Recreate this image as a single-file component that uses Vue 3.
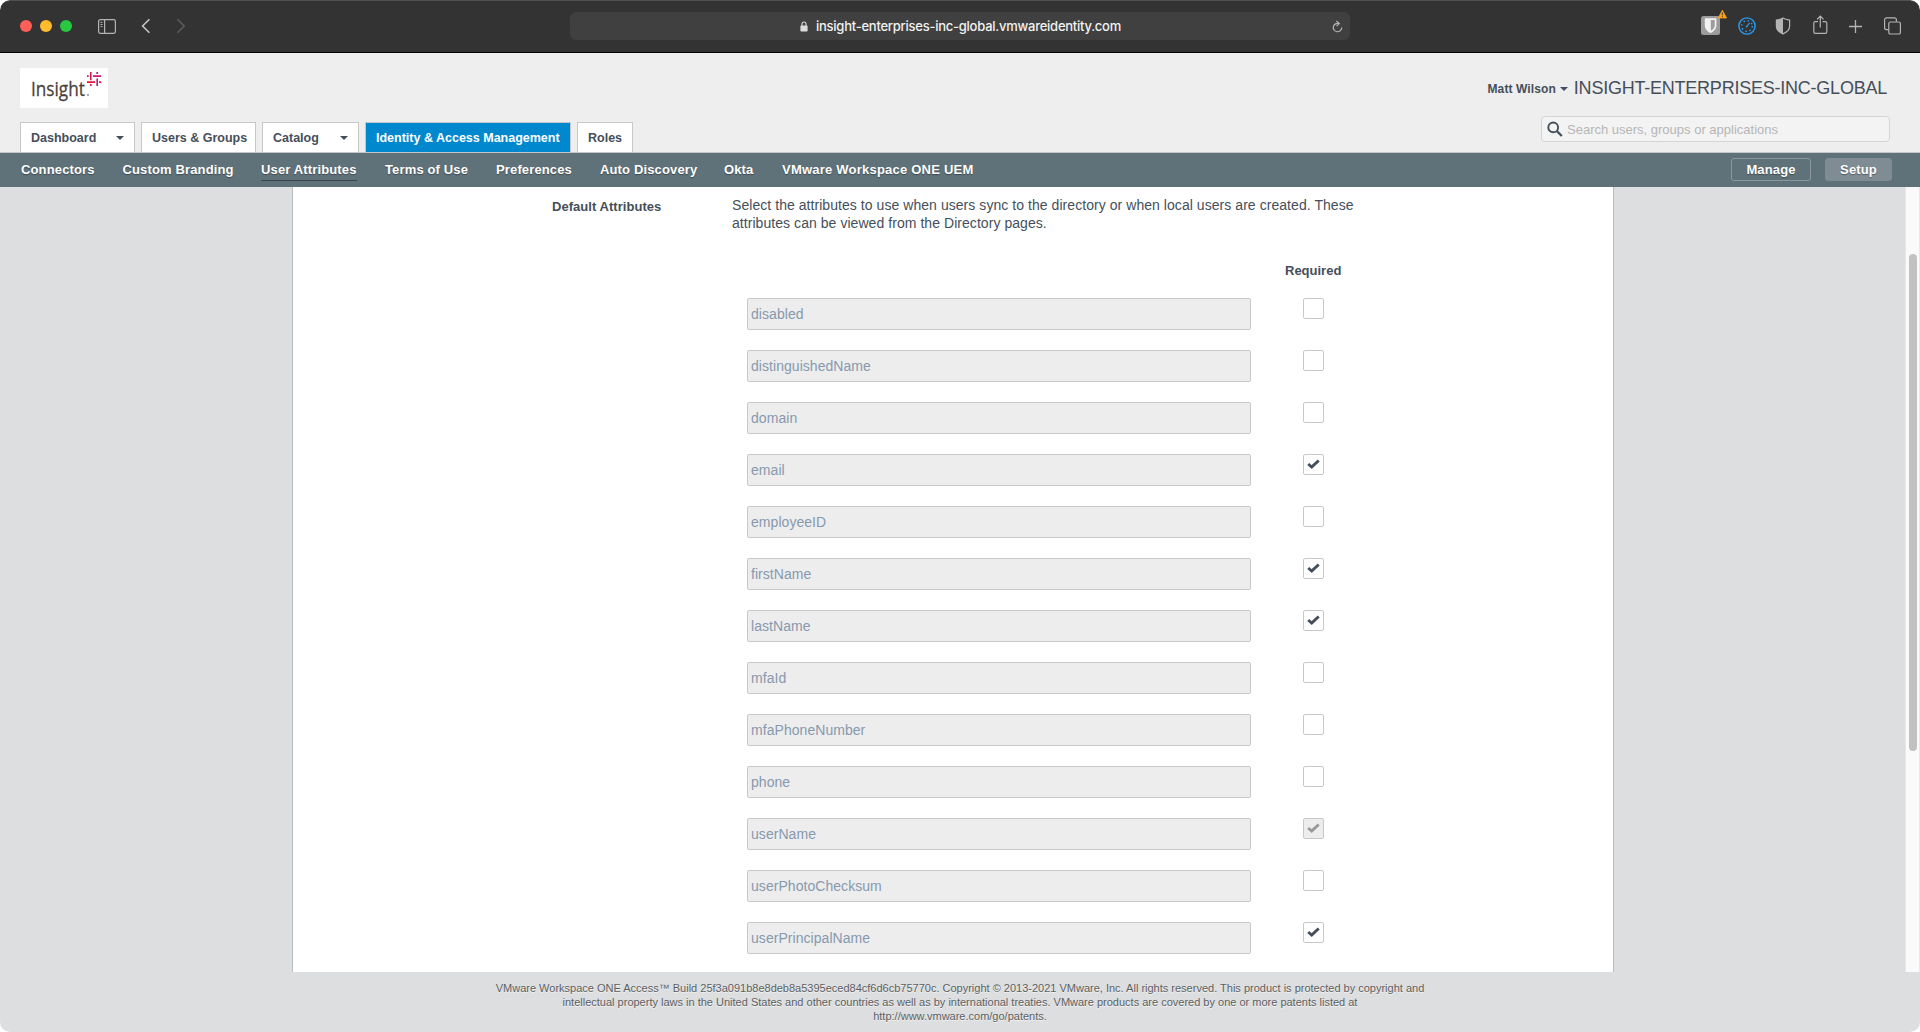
<script setup>
const tabs = [
  { label: 'Dashboard', w: 115, caret: true },
  { label: 'Users & Groups', w: 115 },
  { label: 'Catalog', w: 97, caret: true },
  { label: 'Identity & Access Management', w: 206, active: true },
  { label: 'Roles', w: 56 },
]
const links = [
  { label: 'Connectors', w: 73.5 },
  { label: 'Custom Branding', w: 110.5 },
  { label: 'User Attributes', w: 96, active: true },
  { label: 'Terms of Use', w: 83 },
  { label: 'Preferences', w: 76 },
  { label: 'Auto Discovery', w: 96 },
  { label: 'Okta', w: 30 },
  { label: 'VMware Workspace ONE UEM', w: 192 },
]
const attributes = [
  { name: 'disabled' },
  { name: 'distinguishedName' },
  { name: 'domain' },
  { name: 'email', required: true },
  { name: 'employeeID' },
  { name: 'firstName', required: true },
  { name: 'lastName', required: true },
  { name: 'mfaId' },
  { name: 'mfaPhoneNumber' },
  { name: 'phone' },
  { name: 'userName', required: true, locked: true },
  { name: 'userPhotoChecksum' },
  { name: 'userPrincipalName', required: true },
]
</script>

<template>
  <div class="window">
    <header class="chrome">
      <div class="left">
        <i class="dot red"></i><i class="dot yellow"></i><i class="dot green"></i>
        <svg class="side" width="18" height="15" viewBox="0 0 18 15" fill="none" stroke="#b4b4b4" stroke-width="1.2"><rect x=".6" y=".6" width="16.8" height="13.8" rx="1.8" /><path d="M6.6 1v13" /><path d="M2.500 3.400h2M2.500 5.500h2M2.500 7.600h2" stroke-width="1" /></svg>
        <svg class="back" width="10" height="16" viewBox="0 0 10 16" fill="none" stroke="#c4c4c4" stroke-width="1.6"><path d="M8.400 1.300 1.600 8l6.800 6.700" /></svg>
        <svg class="fwd" width="10" height="16" viewBox="0 0 10 16" fill="none" stroke="#5c5c5c" stroke-width="1.6"><path d="m1.400 1.300 6.800 6.700-6.800 6.700" /></svg>
      </div>
      <div class="address">
        <svg class="lock" width="8" height="11" viewBox="0 0 8 11"><rect x=".4" y="4.600" width="7.200" height="5.900" rx="1" fill="#dcdcdc" /><path d="M2 5V3a2 2 0 0 1 4 0v2" fill="none" stroke="#dcdcdc" stroke-width="1.100" /></svg>
        <span class="t url">insight-enterprises-inc-global.vmwareidentity.com</span>
        <svg class="reload" width="11" height="13" viewBox="0 0 11 13" fill="none" stroke="#b5b5b5" stroke-width="1.200"><path d="M6.900 3.600A4.200 4.200 0 1 0 9.700 7.500M4.400 1l2.900 2.600-2.800 2.500" /></svg>
      </div>
      <div class="tools">
        <svg width="28" height="28" viewBox="0 0 28 28"><rect x="1" y="7" width="19" height="19" rx="2.500" fill="#9c9c9c" /><path d="M4.800 9.200h11.600v7.200c0 3.700-2.800 6-5.800 7.600-3-1.600-5.800-3.900-5.800-7.600z" fill="#f2f2f2" /><path d="M10.800 11h3.900v5.400c0 2.500-1.600 4-3.900 5.400z" fill="#9c9c9c" /><path d="M22.400 1.300 26.600 9H18.200z" fill="#ffa21a" stroke="#ffa21a" stroke-width=".8" stroke-linejoin="round" /><path d="M22.400 3.400v3M22.400 7.200v1.100" stroke="#4a3a1a" stroke-width="1" /></svg>
        <svg width="18" height="18" viewBox="0 0 18 18" fill="none" stroke="#2a9df4"><circle cx="9" cy="9" r="8.100" stroke-width="1.400" /><circle cx="9" cy="9" r="5.300" stroke-width="1.500" stroke-dasharray="1.500 2.660" /><path d="m8.400 10 3.200-4.200" stroke-width="1.200" /><circle cx="8.600" cy="9.600" r=".9" fill="#2a9df4" stroke="none" /></svg>
        <svg width="16" height="18" viewBox="0 0 16 18"><path d="M8 1.100c2 1.300 4 1.700 6.600 2v6.200c0 3.800-2.800 6-6.600 7.600-3.800-1.600-6.600-3.800-6.600-7.600V3.100c2.600-.3 4.600-.7 6.600-2z" fill="none" stroke="#b4b4b4" stroke-width="1.200" /><path d="M8 1v16C4.200 15.400 1.200 13 1.200 9.300V3C3.800 2.700 6 2.300 8 1z" fill="#b4b4b4" /></svg>
        <svg width="15" height="20" viewBox="0 0 15 20" fill="none" stroke="#b4b4b4" stroke-width="1.200"><path d="M5 6.600H2.200A1.400 1.400 0 0 0 .8 8v9a1.400 1.400 0 0 0 1.400 1.400h10.200a1.400 1.400 0 0 0 1.400-1.400V8a1.400 1.400 0 0 0-1.400-1.400H9.600M7.300 12.500V1.300M4.100 4.300l3.200-3.200 3.200 3.200" /></svg>
        <svg width="13" height="13" viewBox="0 0 13 13" stroke="#b4b4b4" stroke-width="1.300"><path d="M6.500 0v13M0 6.500h13" /></svg>
        <svg width="17" height="18" viewBox="0 0 17 18" fill="none" stroke="#b4b4b4" stroke-width="1.200"><rect x="4.800" y="5" width="11.600" height="12" rx="1.600" /><path d="M4.600 12.600H2.500a1.900 1.900 0 0 1-1.900-1.900v-8A1.900 1.900 0 0 1 2.500.8h8a1.900 1.900 0 0 1 1.900 1.900v2" /></svg>
      </div>
    </header>

    <section class="masthead">
      <div class="brandside">
        <div class="logo">
          <span class="word">Insight</span><i class="stop"></i>
          <svg class="hash" width="15" height="15" viewBox="0 0 15 15"><path d="M3 0h1.600v8.300H3zM3 12h1.600v2H3z" fill="#e0174a" /><path d="M0 9.300h8v1.600H0zM12 9.300h2.200v1.600H12z" fill="#f0103a" /><path d="M6 3.200h8.200v1.700H6zM0 3.200h1.700v1.700H0z" fill="#d6127f" /><path d="M9.400 6.500H11V14H9.400zM9.400 0H11v2H9.400z" fill="#a4218c" /></svg>
        </div>
        <nav class="tabs">
          <a v-for="t in tabs" :key="t.label" class="tab" :class="{ active: t.active }" :style="{ width: t.w + 'px' }"><span class="t">{{ t.label }}</span><i v-if="t.caret" class="caret"></i></a>
        </nav>
      </div>
      <div class="account">
        <div class="who"><span class="t user">Matt Wilson</span><i class="caret"></i><span class="t tenant">INSIGHT-ENTERPRISES-INC-GLOBAL</span></div>
        <div class="search">
          <svg width="16" height="16" viewBox="0 0 16 16" fill="none" stroke="#454f5a"><circle cx="6.200" cy="6.400" r="4.900" stroke-width="1.900" /><path d="m9.800 10 5 5" stroke-width="2.400" /></svg>
          <span class="t">Search users, groups or applications</span>
        </div>
      </div>
    </section>

    <nav class="subnav">
      <a v-for="l in links" :key="l.label" class="t" :class="{ on: l.active }" :style="{ width: l.w + 'px' }">{{ l.label }}</a>
      <span class="grow"></span>
      <button class="manage">Manage</button>
      <button class="setup">Setup</button>
    </nav>

    <main class="body">
      <div class="panel">
        <h2 class="heading">Default Attributes</h2>
        <div class="content">
          <p class="desc">Select the attributes to use when users sync to the directory or when local users are created. These<br>attributes can be viewed from the Directory pages.</p>
          <div class="colhead">Required</div>
          <div v-for="a in attributes" :key="a.name" class="row">
            <div class="field">{{ a.name }}</div>
            <div class="check" :class="{ locked: a.locked }">
              <svg v-if="a.required" width="13" height="10" viewBox="0 0 13 10"><path d="M1.200 5 4.700 8 11.700 1.500" fill="none" stroke="currentColor" stroke-width="2.900" /></svg>
            </div>
          </div>
        </div>
      </div>
      <div class="track"><div class="thumb"></div></div>
    </main>

    <footer class="legal">
      <span class="t">VMware Workspace ONE Access™ Build 25f3a091b8e8deb8a5395eced84cf6d6cb75770c. Copyright © 2013-2021 VMware, Inc. All rights reserved. This product is protected by copyright and</span>
      <span class="t">intellectual property laws in the United States and other countries as well as by international treaties. VMware products are covered by one or more patents listed at</span>
      <span class="t">http://www.vmware.com/go/patents.</span>
    </footer>
  </div>
</template>

<style>
body { background: #fff; }
</style>

<style scoped>
* { box-sizing: border-box; }
.window { width: 1920px; height: 1032px; display: flex; flex-direction: column; border-radius: 10px; overflow: hidden; background: #dddee0; font-family: "Liberation Sans", Arial, sans-serif; color: #454f5a; font-size: 13px; }
.t { white-space: nowrap; }
.chrome { height: 53px; flex: none; display: flex; align-items: center; padding-bottom: 1px; background: #333; border-top: 1px solid #505050; border-bottom: 1px solid #000; border-radius: 10px 10px 0 0; }
.left { width: 570px; display: flex; align-items: center; padding-left: 20px; }
.dot { width: 12px; height: 12px; border-radius: 50%; margin-right: 8px; }
.red { background: #ff5f57; }
.yellow { background: #febc2e; }
.green { background: #28c840; }
.side { margin-left: 18px; }
.back { margin-left: 25px; }
.fwd { margin-left: 25px; }
.address { width: 780px; height: 28px; border-radius: 6px; background: #404040; display: flex; align-items: center; color: #f2f2f2; font-family: Inter, sans-serif; font-size: 13px; font-weight: 500; }
.lock { margin-left: 230px; }
.url { margin-left: 8px; letter-spacing: -.25px; }
.reload { margin-left: auto; margin-right: 7px; }
.tools { flex: 1; display: flex; align-items: center; padding-left: 350px; }
.tools svg { flex: none; }
.tools svg:nth-child(1) { margin-top: -6px; }
.tools svg:nth-child(2) { margin-left: 10px; }
.tools svg:nth-child(3) { margin-left: 19px; }
.tools svg:nth-child(4) { margin-left: 22px; margin-top: -2px; }
.tools svg:nth-child(5) { margin-left: 21px; }
.tools svg:nth-child(6) { margin-left: 22px; }
.masthead { height: 100px; flex: none; display: flex; justify-content: space-between; background: #eee; border-bottom: 1px solid #c4c6c8; padding: 15px 30px 0 20px; }
.brandside { display: flex; flex-direction: column; justify-content: space-between; }
.logo { position: relative; width: 88px; height: 40px; background: #fff; padding: 8px 0 0 11px; color: #4b3f3a; font-family: "Open Sans", sans-serif; font-size: 19.500px; font-weight: 500; line-height: 26px; }
.word { display: inline-block; transform-origin: 0 50%; transform: scaleX(.88); -webkit-text-stroke: .3px #4b3f3a; }
.stop { position: absolute; left: 67px; top: 26px; width: 2px; height: 2px; background: #aaa; }
.hash { position: absolute; left: 67px; top: 4px; }
.tabs { display: flex; gap: 6px; }
.tab { height: 30px; border: 1px solid #c6c8ca; border-bottom: 0; background: #fff; display: flex; align-items: center; justify-content: space-between; padding: 0 10px; font-size: 12.500px; font-weight: bold; }
.active { background: #0088ce; color: #fff; }
.caret { border: 4px solid transparent; border-top-color: #454f5a; border-bottom: 0; }
.account { display: flex; flex-direction: column; align-items: flex-end; }
.who { display: flex; align-items: center; height: 40px; padding-right: 3px; font-weight: bold; }
.user { font-size: 12px; letter-spacing: .1px; padding-top: 1px; }
.who .caret { margin: 1px 6px 0 4px; }
.tenant { font-size: 18px; font-weight: normal; letter-spacing: -.23px; }
.search { width: 349px; height: 26px; margin-top: 8px; border: 1px solid #d4d5d6; border-radius: 4px; background: #f3f3f3; display: flex; align-items: center; color: #b6b6b6; padding-left: 5px; gap: 4px; }
.subnav { height: 34px; flex: none; background: #5f7179; color: #fff; font-weight: bold; letter-spacing: .14px; display: flex; align-items: center; gap: 28px; padding: 0 28px 0 21px; text-shadow: 0 1px 1px rgba(0,0,0,.35); }
.subnav a { height: 22px; line-height: 21px; margin-bottom: 1px; border-bottom: 1px solid transparent; }
.subnav a:last-of-type { letter-spacing: .22px; }
.subnav a.on { border-color: #3d444f; }
.grow { flex: 1; }
button { font: inherit; letter-spacing: inherit; color: inherit; text-shadow: inherit; height: 23px; margin-bottom: 1px; border: 1px solid #8a979d; border-radius: 3px; background: none; padding: 0 0 1px; }
.manage { width: 80px; margin-right: -14px; }
.setup { width: 67px; background: #7f8c93; border-color: #7f8c93; }
.body { height: 785px; flex: none; display: flex; justify-content: space-between; padding-left: 292px; }
.panel { width: 1322px; background: #fff; border: solid #b9bcbe; border-width: 0 1px; display: flex; }
.heading { margin: 0; width: 439px; padding: 12px 0 0 259px; font-size: 13px; line-height: 16px; letter-spacing: .04px; white-space: nowrap; }
.desc { margin: 9px 0 0; font-size: 14px; line-height: 18px; letter-spacing: .055px; white-space: nowrap; }
.colhead { width: 56px; margin: 31px 0 0 553px; line-height: 16px; font-weight: bold; height: 35px; }
.row { display: flex; margin-left: 15px; height: 52px; }
.field { width: 504px; height: 32px; border: 1px solid #c6c8ca; border-radius: 2px; background: #ededed; color: #8799ad; font-size: 14px; letter-spacing: .05px; line-height: 31px; padding-left: 3px; }
.check { width: 21px; height: 21px; margin-left: 52px; border: 1px solid #c6c8ca; border-radius: 2px; display: flex; align-items: center; justify-content: center; padding-bottom: 1px; }
.locked { background: #ededed; color: #999; }
.track { width: 15px; background: #fafafa; border: solid #e8e8e8; border-width: 0 1px; padding: 67px 0 0 3px; }
.thumb { width: 8px; height: 497px; border-radius: 4px; background: #c1c1c1; }
.legal { flex: 1; display: flex; flex-direction: column; align-items: center; padding-top: 9px; font-size: 11px; line-height: 14px; color: #5c5f62; text-shadow: 0 1px 0 #f2f2f2; }
</style>
